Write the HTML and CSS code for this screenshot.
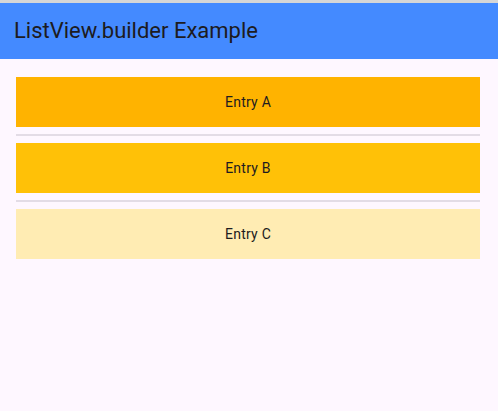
FILE: index.html
```html
<!DOCTYPE html>
<html>
<head>
<meta charset="utf-8">
<link rel="stylesheet" href="styles.css">
</head>
<body>
<div class="topline"></div>
<header class="appbar"><h1 class="title">ListView.builder Example</h1></header>
<main class="list">
  <div class="entry entry-a">Entry A</div>
  <div class="divider"></div>
  <div class="entry entry-b">Entry B</div>
  <div class="divider"></div>
  <div class="entry entry-c">Entry C</div>
</main>
</body>
</html>
```
FILE: styles.css
```css
html, body {
  margin: 0;
  padding: 0;
  background: #fef7ff;
  font-family: Roboto, "Noto Sans", sans-serif;
  color: #1d1b20;
}
body {
  width: 498px;
  height: 411px;
  overflow: hidden;
}
.topline {
  height: 3px;
  background: #d6d6d6;
}
.appbar {
  height: 56px;
  background: #448aff;
  display: flex;
  align-items: center;
  padding: 0 14px;
}
.title {
  margin: 0;
  font-size: 22px;
  font-weight: 400;
  line-height: 28px;
  color: #1d1b20;
}
.list {
  padding: 18px 18px 0 16px;
  display: flex;
  flex-direction: column;
}
.entry {
  height: 50px;
  display: flex;
  align-items: center;
  justify-content: center;
  font-size: 14px;
  letter-spacing: 0.25px;
  color: #1d1b20;
}
.entry-a { background: #ffb300; }
.entry-b { background: #ffc107; }
.entry-c { background: #ffecb3; }
.divider {
  height: 2px;
  margin: 7px 0;
  background: #e3dce6;
}
```
